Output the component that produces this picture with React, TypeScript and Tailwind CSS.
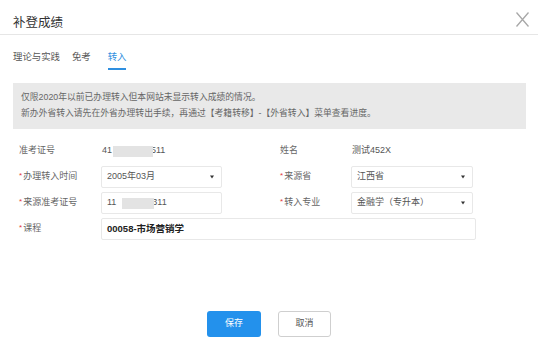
import React from 'react';

const Caret: React.FC = () => (
  <svg width="4" height="4" viewBox="0 0 4 4" className="mr-[3px]">
    <path d="M0 0.5 L4 0.5 L2 3.5 Z" fill="#333" />
  </svg>
);

const Label: React.FC<{ text: string; required?: boolean; width: string }> = ({ text, required, width }) => (
  <div className={`${width} flex items-center text-[9px] text-[#666]`}>
    {required && <span className="text-[#e4393c] text-[8px] -mt-[3px] mr-[1px]">*</span>}
    <span>{text}</span>
  </div>
);

const Mask: React.FC<{ w: string }> = ({ w }) => (
  <span className={`${w} relative z-10 inline-block h-[11px] bg-[#e3e3e3]`} />
);

const Select: React.FC<{ value: string; width: string }> = ({ value, width }) => (
  <div
    className={`${width} h-[22px] flex items-center justify-between pl-[5px] pr-[4px] border border-[#e8e8e8] rounded-[2px] text-[9px] text-[#555]`}
  >
    <span>{value}</span>
    <Caret />
  </div>
);

export default function App() {
  return (
    <div
      className="w-[538px] h-[353px] bg-white overflow-hidden"
      style={{ fontFamily: '"Liberation Sans", "Noto Sans CJK SC", sans-serif' }}
    >
      {/* 标题 */}
      <div className="h-[35px] flex items-start justify-between pl-[13px] pr-[9px] border-b border-[#e6e6e6]">
        <div className="mt-[16px] text-[12.5px] leading-[14px] text-[#333]">补登成绩</div>
        <svg width="13" height="15" viewBox="0 0 13 15" className="mt-[12px]">
          <path d="M0.5 0.5 L12.5 14.5 M12.5 0.5 L0.5 14.5" stroke="#a8a8a8" strokeWidth="1.3" />
        </svg>
      </div>

      {/* 选项卡 */}
      <div className="flex pl-[13px] mt-[16px] text-[9.4px] leading-[12px]">
        <div className="pb-[7px] text-[#555]">理论与实践</div>
        <div className="ml-[12px] pb-[7px] text-[#555]">免考</div>
        <div className="ml-[17px] pb-[5px] border-b-2 border-[#2f8fe0] text-[#2f8fe0]">转入</div>
      </div>

      {/* 提示 */}
      <div className="ml-[13px] mt-[13px] w-[513px] h-[46px] bg-[#e9e9e9] pl-[8px] pt-[6px] text-[8.8px] leading-[16px] text-[#666]">
        <div>仅限2020年以前已办理转入但本网站未显示转入成绩的情况。</div>
        <div>新办外省转入请先在外省办理转出手续，再通过【考籍转移】-【外省转入】菜单查看进度。</div>
      </div>

      {/* 表单 */}
      <div className="mt-[11px] pl-[19px] flex flex-col gap-[4px]">
        <div className="flex h-[22px]">
          <Label text="准考证号" width="w-[82px]" />
          <div className="w-[121px] flex items-center pl-[1px] text-[9px] text-[#555]">
            <span>41</span>
            <Mask w="w-[40px] ml-[1px]" />
            <span className="-ml-[2px]">511</span>
          </div>
          <div className="w-[58px]" />
          <Label text="姓名" width="w-[71px]" />
          <div className="flex items-center pl-[1px] text-[9px] text-[#555]">测试452X</div>
        </div>

        <div className="flex h-[22px]">
          <Label text="办理转入时间" required width="w-[82px]" />
          <Select value="2005年03月" width="w-[121px]" />
          <div className="w-[58px]" />
          <Label text="来源省" required width="w-[71px]" />
          <Select value="江西省" width="w-[122px]" />
        </div>

        <div className="flex h-[22px]">
          <Label text="来源准考证号" required width="w-[82px]" />
          <div className="w-[121px] h-[22px] flex items-center pl-[5px] border border-[#e8e8e8] rounded-[2px] text-[9px] text-[#555]">
            <span>11</span>
            <Mask w="w-[32px] ml-[6px]" />
            <span className="-ml-[2px]">311</span>
          </div>
          <div className="w-[58px]" />
          <Label text="转入专业" required width="w-[71px]" />
          <Select value="金融学（专升本）" width="w-[122px]" />
        </div>

        <div className="flex h-[22px]">
          <Label text="课程" required width="w-[82px]" />
          <div className="w-[375px] h-[22px] flex items-center pl-[5px] border border-[#e8e8e8] rounded-[2px] text-[9.5px] font-semibold text-[#222]">
            00058-市场营销学
          </div>
        </div>
      </div>

      {/* 按钮 */}
      <div className="mt-[71px] flex justify-center gap-[17px]">
        <button className="w-[54px] h-[26px] rounded-[3px] bg-[#2391ec] text-white text-[9px]">保存</button>
        <button className="w-[53px] h-[26px] rounded-[3px] border border-[#cfcfcf] bg-white text-[#555] text-[9px]">取消</button>
      </div>
    </div>
  );
}
